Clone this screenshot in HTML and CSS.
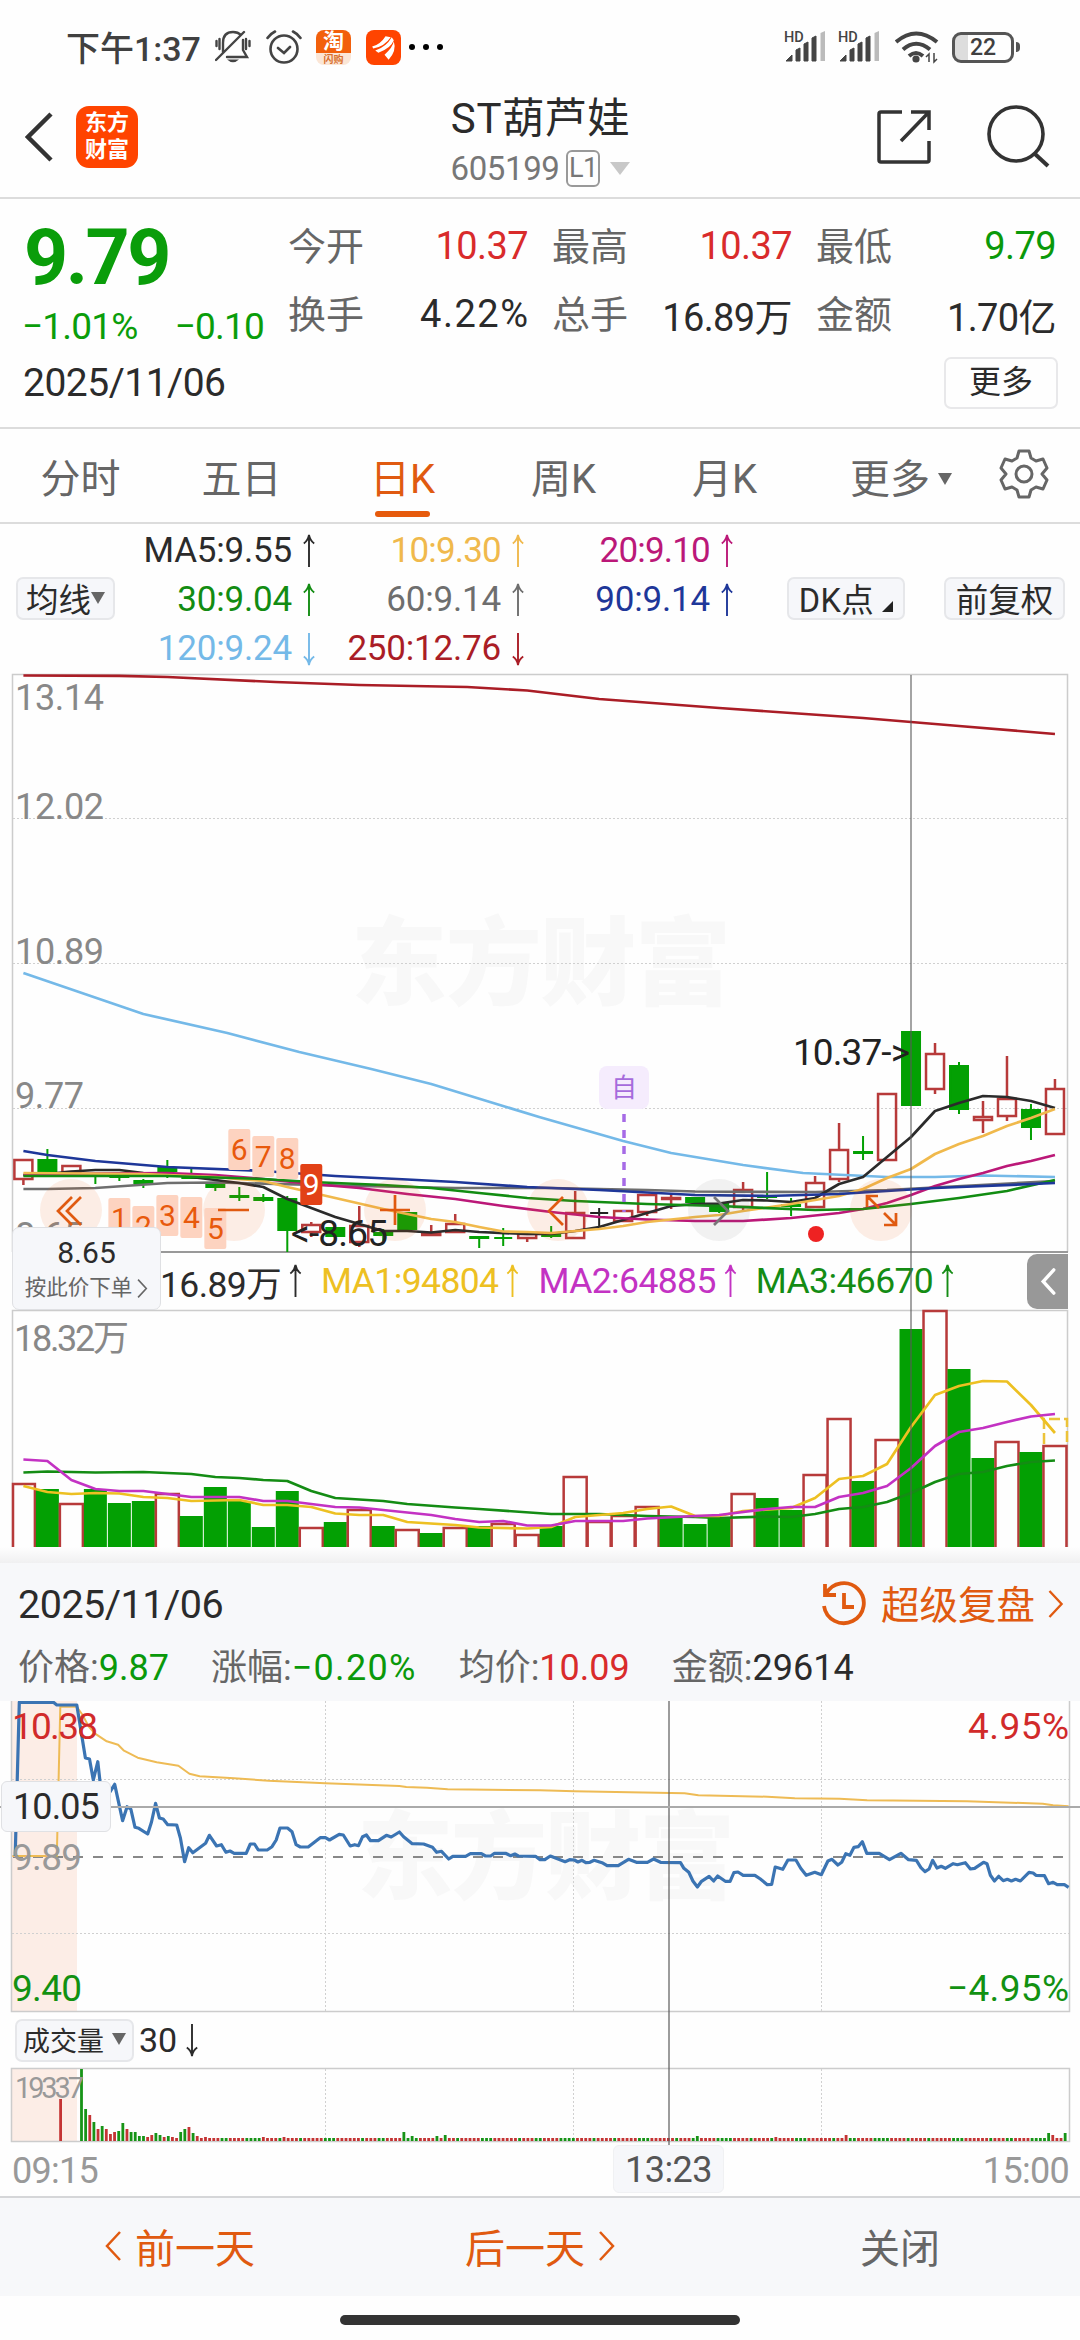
FILE: index.html
```html
<!doctype html>
<html lang="zh-CN">

<head>
  <title>ST葫芦娃 605199</title>
  <meta charset="UTF-8">
  <link rel="stylesheet" href="styles.css">
</head>

<body>
  <svg class="defs">
    <symbol id="up" viewBox="0 0 14 36"><path d="M7 35V2M1.500 10Q6 7 7 1Q8 7 12.500 10" fill="none" stroke="currentColor" stroke-width="2" /></symbol>
    <symbol id="down" viewBox="0 0 14 36"><path d="M7 1V34M1.500 26Q6 29 7 35Q8 29 12.500 26" fill="none" stroke="currentColor" stroke-width="2" /></symbol>
    <symbol id="right" viewBox="0 0 16 30"><path d="M1 1L14 15L1 29" fill="none" stroke="currentColor" stroke-width="2.500" /></symbol>
    <symbol id="left" viewBox="0 0 16 30"><path d="M15 1L2 15L15 29" fill="none" stroke="currentColor" stroke-width="2.500" /></symbol>
    <symbol id="signal" viewBox="0 0 44 34">
      <path d="M2 31L8 25V31ZM12 31V20L16 18V31ZM20 31V14L24 12V31ZM28 31V8L32 6V31Z" fill="#444" stroke="#444" />
      <path d="M36.500 31V3L41 1V31Z" fill="#bbb" />
    </symbol>
  </svg>

  <div class="status">
    <span class="clock">下午1:37</span>
    <svg class="bell" viewBox="0 0 36 34">
      <g fill="none" stroke="#444" stroke-width="2.400" stroke-linecap="round">
        <path d="M8 22V13Q8 2 18 2Q23 2 26 5M28 10V20L32 27H12M29 2L1 30M1.500 11V16M4.500 9V19M31 9V19M34.500 11V16" />
      </g>
      <path d="M12 29.500H24Q18 35 12 29.500" fill="#444" />
    </svg>
    <svg class="alarm" viewBox="0 0 36 34">
      <g fill="none" stroke="#444" stroke-width="2.600" stroke-linecap="round">
        <circle cx="18" cy="19" r="13.500" />
        <path d="M12 18L18 23L24 17M1.500 8Q4 4 9 1.500M34.500 8Q32 4 27 1.500" />
      </g>
    </svg>
    <div class="app taobao"><b>淘</b><i>闪购</i></div>
    <div class="app east">
      <svg viewBox="0 0 34 34"><path d="M6 16Q14 14 19 6L24 7Q18 16 7 18ZM9 20Q20 16 25 7L27 10Q24 18 12 22ZM18 24Q26 17 27 11Q30 20 22 29Z" fill="#fff" /></svg>
    </div>
    <span class="dots"><i></i><i></i><i></i></span>
    <svg class="signal" viewBox="0 0 44 34"><use href="#signal" width="44" height="34" /><text x="0" y="12" class="hd">HD</text></svg>
    <svg class="signal" viewBox="0 0 44 34"><use href="#signal" width="44" height="34" /><text x="0" y="12" class="hd">HD</text></svg>
    <svg class="wifi" viewBox="0 0 44 34">
      <g fill="none" stroke="#444" stroke-width="4">
        <path d="M1 11Q21 -6 42 11M8 18.500Q21 7 35 18.500M14 25Q21 19 28 25" />
      </g>
      <circle cx="21" cy="28" r="3.600" fill="#444" />
      <path d="M34 31V23L31 26M39 22V31L42 28" fill="none" stroke="#444" stroke-width="1.500" />
    </svg>
    <div class="battery">22</div>
  </div>

  <div class="header">
    <svg class="back" viewBox="0 0 28 50"><path d="M26 2L3 25L26 48" fill="none" stroke="#333" stroke-width="4.500" /></svg>
    <div class="logo">东方<br>财富</div>
    <div class="title">
      <h1>ST葫芦娃</h1>
      <p>605199<span class="level">L1</span><span class="tri"></span></p>
    </div>
    <svg class="share" viewBox="0 0 54 56"><path d="M25 3H4Q2 3 2 5V51Q2 53 4 53H50Q52 53 52 51V32M34 3H52V21M52 3L24 32" fill="none" stroke="#333" stroke-width="3.500" /></svg>
    <svg class="search" viewBox="0 0 64 64"><circle cx="29" cy="29" r="27" fill="none" stroke="#333" stroke-width="3.600" /><path d="M48 49L61 61" stroke="#333" stroke-width="4" /></svg>
  </div>

  <div class="quote">
    <div class="price">
      <strong>9.79</strong>
      <p><span>−1.01%</span><span>−0.10</span></p>
    </div>
    <div class="facts">
      <dl><dt>今开</dt><dd class="red">10.37</dd></dl>
      <dl><dt>最高</dt><dd class="red">10.37</dd></dl>
      <dl><dt>最低</dt><dd class="green">9.79</dd></dl>
      <dl><dt>换手</dt><dd class="wide">4.22%</dd></dl>
      <dl><dt>总手</dt><dd>16.89万</dd></dl>
      <dl><dt>金额</dt><dd>1.70亿</dd></dl>
    </div>
    <div class="date-row"><span class="date">2025/11/06</span><a class="more">更多</a></div>
  </div>

  <div class="tabs">
    <a>分时</a>
    <a>五日</a>
    <a class="on">日K</a>
    <a>周K</a>
    <a>月K</a>
    <a class="tab-more">更多<span class="tri"></span></a>
    <svg class="gear" viewBox="0 0 50 50">
      <path d="M20 2H30L32 9L37 12L44 10L48 19L43 25L48 31L44 40L37 38L32 41L30 48H20L18 41L13 38L6 40L2 31L7 25L2 19L6 10L13 12L18 9Z" fill="none" stroke="#666" stroke-width="3" stroke-linejoin="round" />
      <circle cx="25" cy="25" r="8" fill="none" stroke="#666" stroke-width="3" />
    </svg>
  </div>

  <div class="legend">
    <a class="chip ma-chip">均线<span class="tri"></span></a>
    <div class="ma">
      <span class="c5">MA5:9.55<svg><use href="#up" /></svg></span>
      <span class="c10">10:9.30<svg><use href="#up" /></svg></span>
      <span class="c20">20:9.10<svg><use href="#up" /></svg></span>
      <span class="c30">30:9.04<svg><use href="#up" /></svg></span>
      <span class="c60">60:9.14<svg><use href="#up" /></svg></span>
      <span class="c90">90:9.14<svg><use href="#up" /></svg></span>
      <span class="c120">120:9.24<svg><use href="#down" /></svg></span>
      <span class="c250">250:12.76<svg><use href="#down" /></svg></span>
    </div>
    <a class="chip dk-chip">DK点<span class="corner"></span></a>
    <a class="chip">前复权</a>
  </div>

  <div class="kline">
    <svg class="k-price" viewBox="0 673 1080 580">
      <text x="351" y="997" class="mark" textLength="380">东方财富</text>
      <path class="frame" d="M12.500 1252V674.500H1067.500V1252" />
      <path class="grid" d="M13 818.500H1067M13 963.500H1067M13 1108.500H1067" />
      <g class="axis">
        <text x="15" y="710" textLength="89">13.14</text>
        <text x="15" y="819" textLength="89">12.02</text>
        <text x="15" y="964" textLength="89">10.89</text>
        <text x="15" y="1108" textLength="69">9.77</text>
        <text x="15" y="1248" textLength="69">8.65</text>
      </g>
      <path d="M12 1252H1068" stroke="#999" stroke-width="2" />
      <g id="candles"></g>
      <g id="averages"></g>
      <g class="pads">
        <circle cx="71" cy="1210" r="31" />
        <circle cx="234" cy="1210" r="31" />
        <circle cx="395" cy="1210" r="31" />
        <circle cx="558" cy="1210" r="31" />
        <circle cx="719" cy="1210" r="31" class="off" />
        <circle cx="881" cy="1210" r="31" />
      </g>
      <g id="steps"></g>
      <path class="pad-icon" d="M72 1197L58 1211L72 1225M81 1197L67 1211L81 1225M218 1210H249M380 1210H410M395 1195V1225M563 1197L549 1211L563 1225M867 1207V1196H878M867 1196L879 1208M884 1225H896V1213M896 1225L884 1213" />
      <path class="pad-icon off" d="M714 1197L728 1211L714 1225" />
      <path d="M624 1114V1212" stroke="#a66be6" stroke-width="3.500" stroke-dasharray="8 8" />
      <rect x="599" y="1066" width="50" height="43" rx="8" fill="#f5ecfd" />
      <text x="624" y="1097" class="self">自</text>
      <circle cx="816" cy="1234" r="8" fill="#ee2222" />
      <g class="peak">
        <text x="291" y="1246" textLength="97">&lt;-8.65</text>
        <text x="793" y="1065" textLength="117">10.37-&gt;</text>
      </g>
    </svg>
    <div class="vol-legend">
      <span>16.89万<svg><use href="#up" /></svg></span>
      <span class="v1">MA1:94804<svg><use href="#up" /></svg></span>
      <span class="v2">MA2:64885<svg><use href="#up" /></svg></span>
      <span class="v3">MA3:46670<svg><use href="#up" /></svg></span>
    </div>
    <svg class="k-vol" viewBox="0 1309 1080 238">
      <path class="frame" d="M12.500 1547V1310.500H1067.500V1547" />
      <text x="14" y="1351" class="vol-max" textLength="115">18.32万</text>
      <g id="volumes"></g>
      <path d="M1044 1444V1419H1067V1444" fill="none" stroke="#ecc33a" stroke-width="2.500" stroke-dasharray="11 4" />
      <g id="volAverages"></g>
    </svg>
    <div class="cross"></div>
    <div class="order"><b>8.65</b><span>按此价下单<svg><use href="#right" /></svg></span></div>
    <div class="fold"><svg viewBox="0 0 16 30"><path d="M14 3L3 15L14 27" fill="none" stroke="#fff" stroke-width="3.500" stroke-linecap="round" /></svg></div>
  </div>

  <div class="detail">
    <div class="detail-top">
      <span class="date">2025/11/06</span>
      <a>
        <svg class="replay" viewBox="0 0 46 46">
          <path d="M5 13A20 20 0 1 1 3 25M4 3V14H15M23 12V26H33" fill="none" stroke="#e05a10" stroke-width="3.800" />
        </svg><span>超级复盘</span><svg class="chev"><use href="#right" /></svg>
      </a>
    </div>
    <div class="detail-facts">
      <span>价格:<b class="green">9.87</b></span>
      <span>涨幅:<b class="green wide">−0.20%</b></span>
      <span>均价:<b class="red">10.09</b></span>
      <span>金额:<b>29614</b></span>
    </div>
  </div>

  <div class="day">
    <svg class="d-price" viewBox="0 1701 1080 312">
      <text x="357" y="1891" class="mark" textLength="378">东方财富</text>
      <rect x="12" y="1701" width="65" height="310" class="pre" />
      <path class="frame" d="M11.500 1701V2011.500H1069.500V1701" />
      <path class="grid" d="M12 1779.500H1069M12 1933.500H1069M325.500 1701V2011M573.500 1701V2011M821.500 1701V2011" />
      <path d="M13 1857H1068" stroke="#888" stroke-width="2" stroke-dasharray="10 10" />
      <g id="dayLines"></g>
      <g class="scale">
        <text x="12" y="1739" class="up" textLength="86">10.38</text>
        <text x="12" y="1870" textLength="70">9.89</text>
        <text x="12" y="2001" class="down" textLength="70">9.40</text>
        <text x="968" y="1739" class="up" textLength="101">4.95%</text>
        <text x="947" y="2001" class="down" textLength="122">−4.95%</text>
      </g>
    </svg>
    <div class="day-legend"><a class="chip">成交量<span class="tri"></span></a>30<svg><use href="#down" /></svg></div>
    <svg class="d-vol" viewBox="0 2067 1080 76">
      <rect x="12" y="2069" width="65" height="72" class="pre" />
      <path class="frame" d="M11.500 2141.500V2068.500H1069.500V2141.500Z" />
      <path class="grid" d="M325.500 2069V2141M573.500 2069V2141M821.500 2069V2141" />
      <g id="dayVolumes"></g>
      <text x="15" y="2098" class="day-max" textLength="69">19337</text>
    </svg>
    <div class="times"><span>09:15</span><span>15:00</span></div>
    <div class="day-cross"></div>
    <div class="day-level"></div>
    <div class="tip level-tip">10.05</div>
    <div class="tip time-tip">13:23</div>
  </div>

  <div class="footer">
    <a><svg><use href="#left" /></svg>前一天</a>
    <a>后一天<svg><use href="#right" /></svg></a>
    <a class="close">关闭</a>
  </div>
  <div class="home"></div>

  <script src="chart.js"></script>
</body>

</html>
```

FILE: styles.css
```css
* {
  box-sizing: border-box;
}

body {
  margin: 0;
  width: 1080px;
  height: 2340px;
  overflow: hidden;
  background: #fefefe;
  color: #2b2b2b;
  font-family: Roboto, "Noto Sans CJK SC", sans-serif;
}

h1, p, dl, dd {
  margin: 0;
}

svg {
  display: block;
  flex: none;
}

.defs {
  position: absolute;
  width: 0;
  height: 0;
}

.red {
  color: #d92b2b;
}

.green {
  color: #0a990a;
}

.tri {
  display: inline-block;
  border: 7px solid transparent;
  border-top: 12px solid #666;
  border-bottom: 0;
}

.date {
  letter-spacing: -.5px;
}

/* status bar */
.status {
  height: 94px;
  display: flex;
  align-items: center;
  padding: 0 60px 0 66px;
  color: #404040;
}

.clock {
  width: 149px;
  margin-top: -2px;
  font-size: 34px;
  font-weight: 500;
  white-space: nowrap;
}

.bell {
  width: 36px;
  height: 34px;
}

.alarm {
  width: 36px;
  height: 34px;
  margin-left: 15px;
}

.app {
  width: 35px;
  height: 35px;
  margin-left: 14px;
  border-radius: 8px;
  background: #ff4400;
  overflow: hidden;
  flex: none;
}

.taobao {
  background: linear-gradient(#f2600c 67%, #fbe6d6 67%);
  display: flex;
  flex-direction: column;
  align-items: center;
  color: #fff;
}

.taobao b {
  font-size: 21px;
  line-height: 23px;
}

.taobao i {
  font: 700 10px/11px "Noto Sans CJK SC", sans-serif;
  color: #d8702c;
}

.east {
  margin-left: 15px;
}

.dots {
  display: flex;
  gap: 8px;
  margin-left: 8px;
  margin-right: auto;
}

.dots i {
  width: 6px;
  height: 6px;
  border-radius: 3px;
  background: #000;
}

.hd {
  font: 500 14.500px Roboto, sans-serif;
  fill: #444;
}

.signal {
  width: 44px;
  height: 34px;
  margin-right: 10px;
}

.wifi {
  width: 44px;
  height: 34px;
  margin: 2px 13px 0 3px;
}

.battery {
  position: relative;
  width: 62px;
  height: 31px;
  margin-right: 6px;
  border: 3.500px solid #555;
  border-radius: 9px;
  background: linear-gradient(90deg, #ddd 13px, transparent 13px);
  font-size: 23px;
  font-weight: 500;
  line-height: 25px;
  text-align: center;
}

.battery::after {
  content: "";
  position: absolute;
  right: -9px;
  top: 7px;
  width: 4px;
  height: 10px;
  border-radius: 0 4px 4px 0;
  background: #555;
}

/* header */
.header {
  height: 105px;
  display: flex;
  align-items: center;
  padding: 0 29px 18px 25px;
  border-bottom: 2px solid #dcdcdc;
}

.back {
  width: 28px;
  height: 50px;
}

.logo {
  width: 62px;
  height: 62px;
  margin: 0 0 0 23px;
  padding-top: 3px;
  border-radius: 13px;
  background: #ff4400;
  color: #fff;
  font-size: 22px;
  font-weight: 700;
  line-height: 27px;
  text-align: center;
}

.title {
  flex: 1;
  display: flex;
  flex-direction: column;
  align-items: center;
  padding-left: 66px;
  padding-top: 8px;
}

.title h1 {
  font-size: 42px;
  font-weight: 400;
  line-height: 52px;
  letter-spacing: .7px;
}

.title p {
  display: flex;
  align-items: center;
  gap: 7px;
  height: 44px;
  padding-top: 4px;
  font-size: 33px;
  color: #777;
  letter-spacing: -.4px;
}

.level {
  width: 34px;
  height: 37px;
  border: 2px solid #999;
  border-radius: 6px;
  font-size: 27px;
  line-height: 33px;
  text-align: center;
}

.title .tri {
  border-width: 13px 10px 0;
  border-top-color: #c8c8c8;
  margin-left: 3px;
}

.share {
  width: 54px;
  height: 56px;
}

.search {
  width: 64px;
  height: 64px;
  margin-left: 56px;
}

/* quote */
.quote {
  height: 230px;
  display: grid;
  grid-template: 152px 1fr / 240px 1fr;
  column-gap: 24px;
  padding: 13px 24px 0;
  border-bottom: 2px solid #dcdcdc;
}

.price {
  color: #0a9d0a;
}

.price strong {
  display: block;
  font-size: 77px;
  font-weight: 700;
  line-height: 92px;
  letter-spacing: -2.500px;
}

.price p {
  display: flex;
  justify-content: space-between;
  margin-left: -2px;
  padding-top: 1px;
  font-size: 37px;
  line-height: 44px;
  letter-spacing: -.8px;
}

.facts {
  display: grid;
  grid-template-columns: repeat(3, 240px);
  grid-auto-rows: 68px;
  column-gap: 24px;
}

.facts dl {
  display: flex;
  justify-content: space-between;
  align-items: center;
  font-size: 38px;
  white-space: nowrap;
}

.facts dt {
  margin-top: -5px;
  color: #666;
}

.facts dd {
  letter-spacing: -.6px;
}

.facts .wide {
  letter-spacing: 1.500px;
  margin-right: -1.500px;
}

.date-row {
  grid-column: 1 / 3;
  display: flex;
  justify-content: space-between;
  align-items: center;
  height: 38px;
  margin-left: -1px;
  font-size: 39px;
}

.more {
  width: 114px;
  height: 52px;
  margin-right: -2px;
  border: 2px solid #e8e8ea;
  border-radius: 7px;
  font-size: 32px;
  line-height: 47px;
  text-align: center;
}

/* period tabs */
.tabs {
  height: 95px;
  display: flex;
  align-items: center;
  border-bottom: 2px solid #dcdcdc;
  font-size: 40px;
  color: #666;
}

.tabs a {
  position: relative;
  width: 161px;
  text-align: center;
}

.tabs .on {
  color: #e05a10;
}

.tabs .on::after {
  content: "";
  position: absolute;
  left: 53px;
  bottom: -12px;
  width: 55px;
  height: 6px;
  border-radius: 3px;
  background: #e65a0c;
}

.tabs .tab-more {
  width: 194px;
  padding-right: 2px;
}

.tab-more .tri {
  margin: 0 0 8px 8px;
}

.gear {
  width: 50px;
  height: 50px;
  margin-top: -4px;
}

/* moving average legend */
.chip {
  display: flex;
  align-items: center;
  justify-content: center;
  height: 43px;
  padding-bottom: 2px;
  border: 2px solid #e6e7ea;
  border-radius: 7px;
  background: #f6f7fa;
  font-size: 32.500px;
  width: 121px;
  white-space: nowrap;
}

.legend {
  height: 149px;
  display: flex;
  align-items: center;
  padding: 0 15px 0 16px;
}

.ma-chip {
  width: 99px;
}

.dk-chip {
  width: 118px;
  margin: 0 39px 0 auto;
  letter-spacing: .5px;
}

.corner {
  align-self: flex-end;
  margin: 0 0 4px 8px;
  border-left: 11px solid transparent;
  border-bottom: 11px solid #222;
}

.ma {
  width: 619px;
  display: grid;
  grid-template-columns: repeat(3, 209px);
  grid-auto-rows: 49px;
  justify-content: end;
  padding-top: 2px;
  font-size: 35px;
  letter-spacing: -.2px;
}

.ma span {
  display: flex;
  align-items: center;
  justify-content: flex-end;
}

.ma .c10,
.ma .c20 {
  letter-spacing: -.8px;
}

.ma svg {
  width: 14px;
  height: 34px;
  margin-left: 10px;
}

.c10 { color: #f0b94c; }
.c20 { color: #bb1878; }
.c30 { color: #128c12; }
.c60 { color: #6e6e6e; }
.c90 { color: #1e3799; }
.c120 { color: #74b9e8; }
.c250 { color: #aa1d26; }

/* daily k line */
.kline {
  position: relative;
  height: 890px;
}

.kline::after {
  content: "";
  display: block;
  height: 16px;
  background: linear-gradient(#fefefe, #f0f0f1);
}

.k-price {
  width: 1080px;
  height: 580px;
}

.k-vol {
  width: 1080px;
  height: 238px;
}

.frame {
  fill: none;
  stroke: #ccc;
  stroke-width: 1.500;
}

.grid {
  fill: none;
  stroke: #d0d0d0;
  stroke-dasharray: 2 2;
}

.mark {
  font: 900 96px "Noto Sans CJK SC", sans-serif;
  fill: #f8f8f8;
}

.axis, .vol-max {
  font-size: 36px;
  fill: #888;
}

.peak {
  font-size: 37px;
  fill: #222;
}

.self {
  font-size: 26px;
  text-anchor: middle;
  fill: #a66bdc;
}

.hollow {
  fill: none;
  stroke: #b73a3a;
  stroke-width: 2.500;
}

.solid {
  fill: #03a003;
  stroke: #03a003;
  stroke-width: 2;
}

.doji {
  fill: #222;
  stroke: #222;
  stroke-width: 2;
}

.line {
  fill: none;
  stroke: currentColor;
  stroke-width: 2.700;
  stroke-linejoin: round;
}

.pads {
  fill: #f0641e;
  fill-opacity: .11;
}

.pads .off {
  fill: #555;
  fill-opacity: .08;
}

.pad-icon {
  fill: none;
  stroke: #e05a10;
  stroke-width: 2.700;
}

.pad-icon.off {
  stroke: #777;
}

.step rect {
  fill: #fdd3c0;
}

.step text {
  font-size: 30px;
  text-anchor: middle;
  fill: #e8590c;
}

.step.last rect {
  fill: #e24116;
}

.step.last text {
  fill: #fff;
}

.vol-legend {
  height: 56px;
  display: flex;
  align-items: center;
  gap: 18px;
  padding-left: 160px;
  font-size: 35.500px;
  letter-spacing: -.6px;
}

.vol-legend span {
  display: flex;
  align-items: center;
  height: 50px;
}

.vol-legend svg {
  width: 15px;
  height: 34px;
  margin-left: 7px;
}

.v1 { color: #edc022; }
.v2 { color: #c332c3; }
.v3 { color: #148c14; }

.cross {
  position: absolute;
  left: 910px;
  top: 2px;
  width: 2px;
  height: 872px;
  background: rgba(90, 90, 90, .55);
}

.order {
  position: absolute;
  left: 12px;
  top: 554px;
  width: 149px;
  height: 83px;
  padding-top: 7px;
  border: 1.500px solid #dfe0e3;
  border-radius: 7px;
  background: #f6f7fa;
  text-align: center;
}

.order b {
  display: block;
  font-size: 30px;
  font-weight: 400;
  line-height: 36px;
}

.order span {
  display: flex;
  justify-content: center;
  align-items: center;
  gap: 5px;
  font-size: 21.500px;
  line-height: 34px;
  color: #666;
}

.order svg {
  width: 11px;
  height: 19px;
}

.fold {
  position: absolute;
  left: 1027px;
  top: 581px;
  width: 41px;
  height: 55px;
  padding: 13px;
  border-radius: 10px 0 0 10px;
  background: #989898;
}

.fold svg {
  width: 16px;
  height: 29px;
}

/* selected day */
.detail {
  height: 138px;
  padding: 14px 16px 0 18px;
  background: #f7f8fa;
}

.detail-top {
  display: flex;
  justify-content: space-between;
  align-items: center;
  height: 54px;
  font-size: 39.500px;
}

.detail-top a {
  display: flex;
  align-items: center;
  height: 50px;
  font-size: 38.500px;
  color: #e05a10;
}

.detail-top a span {
  margin-top: -4px;
}

.replay {
  width: 46px;
  height: 46px;
  margin-right: 14px;
}

.chev {
  width: 16px;
  height: 28px;
  margin-left: 13px;
}

.detail-facts {
  display: flex;
  gap: 42px;
  height: 66px;
  align-items: center;
  font-size: 36px;
  color: #666;
}

.detail-facts b {
  font-weight: 400;
}

.detail-facts .wide {
  letter-spacing: 1.300px;
}

.detail-facts b:not([class]) {
  color: #2b2b2b;
}

/* intraday */
.day {
  position: relative;
  height: 495px;
}

.d-price {
  width: 1080px;
  height: 312px;
}

.d-vol {
  width: 1080px;
  height: 76px;
}

.pre {
  fill: #fcede6;
}

.scale {
  font-size: 37px;
  fill: #999;
}

.scale .up {
  fill: #d12a2a;
}

.scale .down {
  fill: #129112;
}

.trade {
  color: #3b74b3;
  stroke-width: 3.200;
}

.mean {
  color: #eebb55;
  stroke-width: 2;
}

.day-legend {
  height: 54px;
  display: flex;
  align-items: center;
  padding-left: 15px;
  font-size: 34px;
}

.day-legend .chip {
  width: 119px;
  margin-right: 5px;
  font-size: 27px;
}

.day-legend .tri {
  margin-left: 8px;
}

.day-legend > svg {
  width: 14px;
  height: 34px;
  margin-left: 8px;
}

.day-max {
  font-size: 29px;
  fill: #999;
}

.times {
  display: flex;
  justify-content: space-between;
  padding: 5px 11px 0 12px;
  font-size: 36px;
  line-height: 46px;
  letter-spacing: -.7px;
  color: #999;
}

.day-cross {
  position: absolute;
  left: 668px;
  top: 0;
  width: 1.500px;
  height: 444px;
  background: rgba(90, 90, 90, .6);
}

.day-level {
  position: absolute;
  left: 0;
  top: 105px;
  width: 1080px;
  height: 2px;
  background: #aaa;
}

.tip {
  position: absolute;
  border: 1.500px solid #e0e1e4;
  border-radius: 6px;
  background: #f6f7fa;
  font-size: 36px;
  text-align: center;
}

.level-tip {
  left: 1px;
  top: 80px;
  width: 110px;
  height: 51px;
  line-height: 50px;
  letter-spacing: -.9px;
}

.time-tip {
  left: 613px;
  top: 444px;
  width: 111px;
  height: 48px;
  border-color: #f0f1f3;
  color: #555;
  line-height: 49px;
  letter-spacing: -.5px;
}

.footer {
  height: 100px;
  display: flex;
  padding-bottom: 2px;
  border-top: 2px solid #d5d6d8;
  background: #f7f8fa;
  font-size: 40px;
  color: #e05a10;
}

.footer a {
  flex: 1;
  display: flex;
  align-items: center;
  justify-content: center;
  gap: 14px;
}

.footer svg {
  width: 16px;
  height: 30px;
}

.footer .close {
  color: #666;
}

.home {
  width: 400px;
  height: 10px;
  margin: 19px auto 0;
  border-radius: 5px;
  background: #333;
}
```

FILE: chart.js
```js
const NS = 'http://www.w3.org/2000/svg'

function add(parent, tag, attrs, text) {
  const el = document.createElementNS(NS, tag)
  for (const key in attrs) el.setAttribute(key, attrs[key])
  if (text) el.textContent = text
  document.getElementById(parent).appendChild(el)
  return el
}

const cx = i => 23.4 + i * 23.99

// kind, body top, body bottom, high, low
const candles = [
  ['r', 1160, 1179, 1160, 1185], ['g', 1160, 1172, 1149, 1176], ['r', 1166, 1172, 1166, 1177],
  ['g', 1175, 1176, 1175, 1184], ['g', 1175, 1177, 1174, 1181], ['g', 1181, 1183, 1179, 1188],
  ['g', 1168, 1171, 1160, 1178], ['g', 1176, 1178, 1169, 1179], ['g', 1184, 1187, 1182, 1191],
  ['g', 1196, 1197, 1187, 1201], ['g', 1198, 1200, 1194, 1202], ['g', 1199, 1230, 1196, 1252],
  ['r', 1225, 1232, 1222, 1237], ['g', 1228, 1236, 1227, 1237], ['r', 1226, 1242, 1206, 1247],
  ['g', 1233, 1235, 1229, 1241], ['g', 1213, 1229, 1212, 1230], ['r', 1233, 1235, 1225, 1236],
  ['r', 1224, 1232, 1214, 1233], ['g', 1237, 1238, 1236, 1248], ['g', 1238, 1238, 1228, 1246],
  ['r', 1234, 1238, 1233, 1242], ['g', 1235, 1236, 1226, 1238], ['r', 1213, 1238, 1191, 1239],
  ['k', 1213, 1213, 1208, 1226], ['r', 1211, 1221, 1210, 1222], ['r', 1195, 1212, 1194, 1216],
  ['r', 1198, 1199, 1194, 1209], ['g', 1198, 1202, 1197, 1203], ['g', 1204, 1211, 1203, 1213],
  ['r', 1190, 1207, 1182, 1211], ['g', 1196, 1197, 1172, 1199], ['g', 1205, 1206, 1198, 1216],
  ['r', 1183, 1207, 1176, 1208], ['r', 1150, 1179, 1123, 1182], ['g', 1152, 1153, 1136, 1160],
  ['r', 1094, 1160, 1094, 1161], ['g', 1032, 1105, 1032, 1106], ['r', 1054, 1089, 1043, 1094],
  ['g', 1066, 1109, 1062, 1114], ['r', 1117, 1120, 1101, 1133], ['r', 1099, 1116, 1056, 1121],
  ['g', 1110, 1127, 1104, 1140], ['r', 1089, 1134, 1079, 1135]
]
const kinds = { r: 'hollow', g: 'solid', k: 'doji' }

candles.forEach(([kind, top, bottom, high, low], i) => {
  const x = cx(i)
  add('candles', 'path', {
    class: kinds[kind],
    d: `M${x} ${high}V${top}M${x} ${bottom}V${low}M${x - 9} ${top}H${x + 9}V${bottom}H${x - 9}Z`
  })
})

// column, y pairs
function average(parent, cls, data) {
  const points = []
  for (let i = 0; i < data.length; i += 2) points.push(cx(data[i]) + ',' + data[i + 1])
  add(parent, 'polyline', { class: 'line ' + cls, points: points.join(' ') })
}

average('averages', 'c250', [0, 675.5, 4, 675.8, 6, 677, 10.5, 682, 14, 685, 18.5, 687, 21, 690.5, 24, 699, 29, 708, 35, 718, 39, 726, 43, 734])
average('averages', 'c120', [0, 973, 5, 1014, 8.5, 1033, 11.5, 1052, 14.5, 1069, 17, 1084, 21.5, 1117, 25, 1141, 27, 1153, 30, 1165, 32.5, 1173, 36, 1177, 38, 1177, 40, 1175.5, 43, 1177])
average('averages', 'c60', [0, 1189, 1, 1189, 3, 1188, 6, 1183, 8, 1182.5, 14, 1186, 18, 1188, 22, 1188, 26, 1190, 28, 1191.5, 33, 1192, 36, 1190, 43, 1181])
average('averages', 'c5', [0, 1175, 1, 1174, 2, 1171.5, 3, 1170, 4, 1170, 5, 1173, 6, 1174, 7, 1177, 8, 1180, 9, 1183, 10, 1187, 11, 1199, 12, 1208, 13, 1217, 14, 1224, 15, 1231, 16, 1231, 17, 1232.5, 18, 1230, 19, 1232, 21, 1234, 22, 1234, 23, 1231, 24, 1227, 25, 1220, 26, 1213, 27, 1206, 28, 1204, 29, 1203.5, 30, 1200, 31, 1200.5, 32, 1202, 33, 1198, 34, 1184, 35, 1177, 36, 1157, 37, 1137, 38, 1111, 39, 1103, 40, 1096, 41, 1097, 42, 1101, 43, 1108])
average('averages', 'c20', [0, 1175, 3, 1173.5, 6, 1173, 8, 1175, 10, 1179, 12, 1184, 14, 1188, 16, 1194, 18, 1199, 20, 1206, 22, 1212, 24, 1217, 26, 1219.5, 28, 1221, 30, 1221, 32, 1218, 34, 1213, 35, 1209, 36, 1203, 37, 1195, 38, 1186, 39, 1179, 40, 1173, 41, 1166, 42, 1161, 43, 1155])
average('averages', 'c10', [0, 1173, 5, 1174, 8, 1177, 10, 1181, 11, 1187, 13, 1198, 15, 1209, 16, 1214, 17, 1219, 18, 1222, 19, 1227, 20, 1231.5, 21, 1232, 22, 1233, 23, 1231, 24, 1229, 25, 1226, 26, 1222, 28, 1217, 29, 1215, 30, 1211, 32, 1204, 33, 1200, 34, 1196, 35, 1189, 36, 1178, 37, 1169, 38, 1154, 39, 1144, 40, 1136, 41, 1126, 42, 1118, 43, 1109])
average('averages', 'c30', [0, 1176, 6, 1176, 10, 1179, 12, 1182, 15, 1185, 17, 1188, 19, 1193, 21, 1198, 23, 1201, 26, 1204, 29, 1206, 33, 1210, 35, 1209, 37, 1204, 39, 1198, 41, 1191, 43, 1180])
average('averages', 'c90', [0, 1151, 1, 1155, 3, 1161, 6, 1167, 10, 1171, 13, 1176, 16, 1179.5, 18, 1182, 21, 1187, 24, 1190, 28, 1195, 31, 1196, 34, 1194, 38, 1188, 43, 1183])

// nine-turn sequence marks, first one at column 4
const steps = [1198, 1206, 1195, 1197, 1208, 1129, 1136, 1138, 1164]
steps.forEach((y, i) => {
  const x = cx(i + 4)
  const cls = 'step' + (i == 8 ? ' last' : '')
  const g = add('steps', 'g', { class: cls, id: 'step' + i })
  add(g.id, 'rect', { x: x - 11, y: y, width: 22, height: 41, rx: 2 })
  add(g.id, 'text', { x: x, y: y + 31 }, String(i + 1))
})

const volumes = [
  'r1483', 'g1489', 'r1503', 'g1489', 'g1503', 'g1501', 'r1493', 'g1516', 'g1487', 'g1501', 'g1527',
  'g1491', 'r1527', 'g1522', 'r1509', 'g1526', 'r1529', 'g1533', 'r1527', 'g1526', 'r1523', 'r1534',
  'g1526', 'r1476', 'r1521', 'r1515', 'r1506', 'g1517', 'g1524', 'g1517', 'r1493', 'g1498', 'g1510',
  'r1474', 'r1418', 'g1481', 'r1439', 'g1329', 'r1310', 'g1369', 'g1458', 'r1441', 'g1452', 'r1445'
]
volumes.forEach((v, i) => {
  const top = +v.slice(1)
  const x = cx(i)
  if (v[0] == 'g') {
    add('volumes', 'rect', { x: x - 11.5, y: top, width: 23, height: 1547 - top, fill: '#03a003' })
  } else {
    add('volumes', 'path', { class: 'hollow', d: `M${Math.max(x - 11.5, 13)} 1547V${top + 1}H${x + 11.5}V1547` })
  }
})

average('volAverages', 'v3', [0, 1472.5, 1, 1471.5, 3, 1472.5, 5, 1472, 7, 1474, 8, 1477, 9, 1478, 10, 1480, 11, 1481, 12, 1491, 13, 1498, 15, 1501, 16, 1504, 18, 1507.5, 19, 1509, 22, 1514, 24, 1514, 26, 1516, 28, 1517, 29, 1518, 31, 1516.5, 32, 1517, 33, 1514, 34, 1509, 35, 1507, 36, 1502, 37, 1493, 38, 1482, 39, 1474, 40, 1472, 41, 1466, 42, 1462, 43, 1460.5])
average('volAverages', 'v1', [0, 1486, 1, 1492, 2, 1494, 3, 1493, 4, 1493.5, 5, 1497, 6, 1498, 7, 1501, 9, 1500, 10, 1505, 11, 1505, 12, 1507, 13, 1513.5, 14, 1515, 15, 1515, 16, 1522, 18, 1525, 19, 1527.5, 21, 1528.5, 22, 1527, 23, 1517, 24, 1515, 25, 1513, 26, 1509, 27, 1506.5, 28, 1516, 29, 1516, 30, 1511, 32, 1508, 33, 1498, 34, 1479, 35, 1476, 36, 1464, 37, 1427, 38, 1395, 39, 1386, 40, 1381, 41, 1381.5, 42, 1405, 43, 1433])
average('volAverages', 'v2', [0, 1459.5, 1, 1461, 2, 1480, 3, 1489, 4, 1491, 5, 1491, 6, 1494, 7, 1497, 9, 1497, 10, 1501, 11, 1501, 12, 1504, 13, 1507, 14, 1507.5, 15, 1510, 17, 1515, 18, 1519, 19, 1522, 20, 1521, 21, 1525.5, 22, 1525.5, 23, 1521, 25, 1521, 26, 1518.5, 28, 1516, 29, 1515, 31, 1509, 32, 1507, 33, 1507, 34, 1497, 35, 1493, 36, 1486, 37, 1468, 38, 1446, 39, 1432, 40, 1428, 41, 1422, 42, 1416.5, 43, 1414])

// intraday lines, both halves of the session on a fine grid
function session(cls, morning, afternoon) {
  const points = []
  const put = (data, left) => {
    for (let i = 0; i < data.length; i += 2) {
      points.push((left + data[i] / 2.904).toFixed(1) + ',' + (1690 + data[i + 1] / 3).toFixed(1))
    }
  }
  put(morning, 0)
  put(afternoon, 540)
  add('dayLines', 'polyline', { class: 'line ' + cls, points: points.join(' ') })
}

session('mean',
  [36, 498, 165, 498, 175, 50, 223, 50, 240, 75, 258, 110, 275, 130, 310, 154, 343, 164, 360, 182, 400, 203, 455, 217, 518, 227, 550, 251, 580, 259, 680, 265, 780, 272, 945, 280, 1160, 288, 1180, 291, 1240, 293, 1300, 298],
  [0, 301, 100, 304, 420, 310, 460, 316, 660, 320, 740, 325, 870, 326, 950, 331, 1240, 334, 1460, 341, 1490, 346, 1535, 349])
session('trade',
  [44, 498, 56, 37, 155, 37, 165, 45, 223, 45, 248, 204, 260, 207, 271, 270, 284, 215, 291, 280, 318, 308, 333, 283, 356, 392, 369, 350, 380, 358, 392, 412, 403, 415, 429, 432, 440, 396, 452, 340, 463, 384, 474, 387, 487, 404, 513, 405, 524, 444, 536, 515, 548, 473, 560, 488, 597, 460, 608, 436, 629, 468, 643, 464, 656, 487, 668, 483, 680, 490, 715, 490, 727, 462, 739, 462, 750, 480, 776, 480, 790, 470, 802, 450, 813, 414, 835, 414, 848, 425, 860, 464, 872, 471, 895, 471, 930, 443, 945, 443, 957, 450, 985, 433, 997, 435, 1017, 468, 1030, 464, 1041, 467, 1053, 440, 1064, 435, 1076, 452, 1099, 452, 1122, 436, 1136, 441, 1160, 426, 1172, 440, 1197, 461, 1230, 462, 1256, 472, 1268, 487, 1282, 484, 1303, 507, 1315, 499, 1352, 499, 1366, 491, 1398, 491, 1410, 498, 1425, 498, 1436, 490, 1468, 490, 1483, 497, 1495, 492, 1505, 498, 1555, 499],
  [0, 509, 14, 509, 30, 498, 73, 515, 86, 509, 100, 510, 110, 516, 122, 511, 133, 518, 145, 517, 157, 511, 180, 518, 195, 527, 227, 527, 257, 508, 280, 517, 312, 517, 330, 507, 350, 517, 408, 518, 418, 535, 432, 547, 444, 573, 457, 591, 469, 574, 491, 559, 504, 573, 516, 558, 538, 574, 552, 574, 563, 548, 575, 546, 590, 556, 624, 556, 640, 567, 660, 584, 673, 583, 683, 531, 705, 538, 720, 510, 743, 510, 757, 535, 773, 556, 798, 547, 817, 554, 836, 513, 848, 508, 865, 525, 876, 517, 888, 491, 900, 496, 912, 472, 924, 470, 936, 455, 949, 490, 985, 490, 1015, 509, 1048, 490, 1070, 509, 1093, 511, 1106, 533, 1118, 545, 1130, 537, 1140, 511, 1153, 534, 1165, 529, 1177, 535, 1200, 521, 1212, 524, 1235, 518, 1250, 537, 1262, 535, 1288, 517, 1298, 521, 1308, 556, 1320, 573, 1332, 559, 1345, 572, 1357, 568, 1369, 573, 1381, 568, 1395, 573, 1420, 547, 1432, 549, 1440, 556, 1465, 557, 1477, 581, 1490, 577, 1502, 584, 1523, 584, 1535, 592])

// minute volumes: busy opening, then a flat run with a few spikes
const opening = [72, 32, 26, 19, 12, 15, 12, 7, 9, 10, 18, 12, 9, 9, 5, 5, 4, 6, 8, 6, 4, 5, 4, 3, 9, 12, 14, 8, 5, 3, 4]
const openingKinds = 'ggrgrgrrrggrggggrrggrgrrggrgrrr'
const flatKinds = 'rrggggrrrrgrrrrgrrrrrgggrrrrrrgrrrggrr'
const spikes = { 44: 4, 49: 4, 78: 9, 80: 5, 86: 5, 88: 6, 149: 5, 168: 4, 185: 6, 234: 8, 235: 6, 238: 8 }

function minute(x, h, kind) {
  add('dayVolumes', 'rect', { x: x - 1.4, y: 2141 - h, width: 2.8, height: h, fill: kind == 'g' ? '#179417' : '#c43434' })
}
minute(60.6, 42, 'r')
for (let i = 0; i < 239; i++) {
  const h = opening[i] || spikes[i] || 3
  let kind = openingKinds[i] || flatKinds[i % flatKinds.length]
  if (spikes[i]) kind = [44, 49, 168, 185, 235].includes(i) ? 'r' : 'g'
  minute(81.5 + i * 4.133, h, kind)
}
```
